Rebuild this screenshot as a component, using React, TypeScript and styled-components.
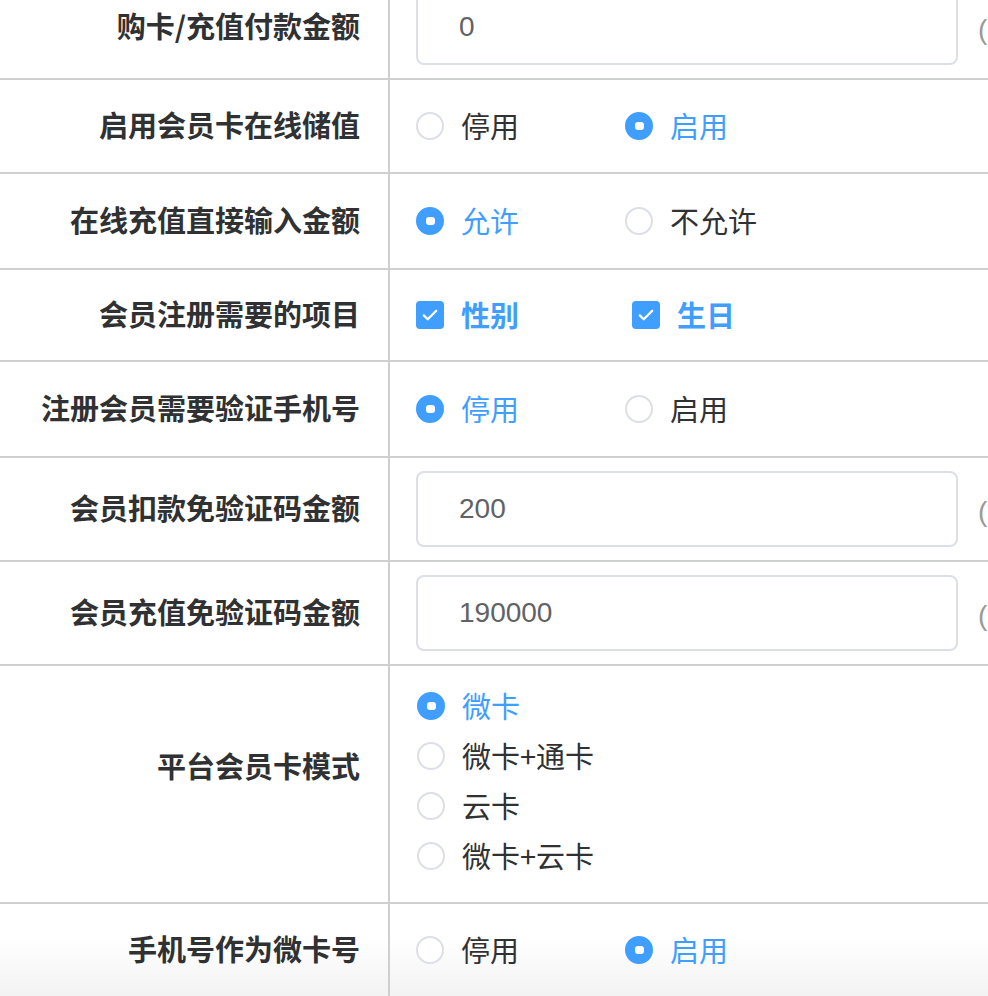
import styled, { createGlobalStyle } from "styled-components";

const GlobalStyle = createGlobalStyle`
  html, body {
    margin: 0;
    padding: 0;
    background: #fff;
    overflow: hidden;
  }
  body {
    font-family: "Liberation Sans", "Noto Sans CJK SC", sans-serif;
  }
`;

const BLUE = "#409eff";

// the page fades to light grey at its lower edge, behind the rows
const Page = styled.div`
  width: 988px;
  height: 996px;
  overflow: hidden;
  background: linear-gradient(to bottom, #fff 0, #fff 936px, #f3f3f3 996px);
`;

const Table = styled.div`
  margin-top: -24px;
`;

const Row = styled.div<{ $h: number }>`
  display: grid;
  grid-template-columns: 390px 1fr;
  height: ${(p) => p.$h}px;
  border-bottom: 2px solid #cfcfcf;
`;

const Label = styled.div<{ $lift?: number }>`
  display: flex;
  align-items: center;
  justify-content: flex-end;
  padding-right: 28px;
  padding-bottom: ${(p) => (p.$lift ?? 0) + 3}px;
  border-right: 2px solid #cfcfcf;
  font-family: "Noto Sans CJK SC", sans-serif;
  font-weight: 700;
  font-size: 29px;
  line-height: 1;
  color: #303133;
  white-space: nowrap;
`;

const Field = styled.div`
  display: flex;
  align-items: center;
  padding-left: 26px;
  white-space: nowrap;
`;

const InputBox = styled.div`
  flex: none;
  width: 542px;
  height: 76px;
  box-sizing: border-box;
  border: 2px solid #dcdfe6;
  border-radius: 8px;
  background: #fff;
  display: flex;
  align-items: center;
  padding-left: 41px;
  font-size: 28px;
  color: #606266;
`;

const Suffix = styled.span`
  margin-left: 20px;
  font-size: 28px;
  color: #999;
`;

const Option = styled.div<{ $w?: number }>`
  display: flex;
  align-items: center;
  width: ${(p) => (p.$w ? `${p.$w}px` : "auto")};
  height: 50px;
`;

const OptionList = styled.div`
  display: flex;
  flex-direction: column;
  padding: 15px 0 0 27px;
`;

const Circle = styled.span<{ $on?: boolean }>`
  flex: none;
  width: 28px;
  height: 28px;
  box-sizing: border-box;
  border-radius: 50%;
  border: 2px solid ${(p) => (p.$on ? BLUE : "#dcdfe6")};
  background: ${(p) => (p.$on ? BLUE : "#fff")};
  display: flex;
  align-items: center;
  justify-content: center;
  &::after {
    content: "";
    display: ${(p) => (p.$on ? "block" : "none")};
    width: 9px;
    height: 8px;
    border-radius: 3px;
    background: #fff;
  }
`;

const Box = styled.span`
  flex: none;
  width: 28px;
  height: 28px;
  border-radius: 4px;
  background: ${BLUE};
  display: flex;
  align-items: center;
  justify-content: center;
`;

const OptText = styled.span<{ $on?: boolean; $bold?: boolean }>`
  margin-left: 17px;
  padding-bottom: 2px;
  font-family: "Noto Sans CJK SC", sans-serif;
  font-size: 29px;
  line-height: 1;
  font-weight: ${(p) => (p.$bold ? 700 : 400)};
  color: ${(p) => (p.$on ? BLUE : "#303133")};
`;

const Radio = ({ text, on, w }: { text: string; on?: boolean; w?: number }) => (
  <Option $w={w}>
    <Circle $on={on} />
    <OptText $on={on}>{text}</OptText>
  </Option>
);

const Check = ({ text, w }: { text: string; w?: number }) => (
  <Option $w={w}>
    <Box>
      <svg width="20" height="20" viewBox="0 0 16 16">
        <path d="M3 8.3l3.2 3.1 6.8-6.8" fill="none" stroke="#fff" strokeWidth="1.8" strokeLinecap="round" strokeLinejoin="round" />
      </svg>
    </Box>
    <OptText $on $bold>{text}</OptText>
  </Option>
);

export default function App() {
  return (
    <Page>
      <GlobalStyle />
      <Table>
        <Row $h={102}>
          <Label>购卡/充值付款金额</Label>
          <Field>
            <InputBox>0</InputBox>
            <Suffix>(元)</Suffix>
          </Field>
        </Row>
        <Row $h={92}>
          <Label>启用会员卡在线储值</Label>
          <Field>
            <Radio text="停用" w={209} />
            <Radio text="启用" on />
          </Field>
        </Row>
        <Row $h={94}>
          <Label>在线充值直接输入金额</Label>
          <Field>
            <Radio text="允许" on w={209} />
            <Radio text="不允许" />
          </Field>
        </Row>
        <Row $h={90}>
          <Label>会员注册需要的项目</Label>
          <Field>
            <Check text="性别" w={216} />
            <Check text="生日" />
          </Field>
        </Row>
        <Row $h={94}>
          <Label>注册会员需要验证手机号</Label>
          <Field>
            <Radio text="停用" on w={209} />
            <Radio text="启用" />
          </Field>
        </Row>
        <Row $h={102}>
          <Label>会员扣款免验证码金额</Label>
          <Field>
            <InputBox>200</InputBox>
            <Suffix>(元)</Suffix>
          </Field>
        </Row>
        <Row $h={102}>
          <Label>会员充值免验证码金额</Label>
          <Field>
            <InputBox>190000</InputBox>
            <Suffix>(元)</Suffix>
          </Field>
        </Row>
        <Row $h={236}>
          <Label $lift={35}>平台会员卡模式</Label>
          <OptionList>
            <Radio text="微卡" on />
            <Radio text="微卡+通卡" />
            <Radio text="云卡" />
            <Radio text="微卡+云卡" />
          </OptionList>
        </Row>
        <Row $h={92}>
          <Label>手机号作为微卡号</Label>
          <Field>
            <Radio text="停用" w={209} />
            <Radio text="启用" on />
          </Field>
        </Row>
      </Table>
    </Page>
  );
}
